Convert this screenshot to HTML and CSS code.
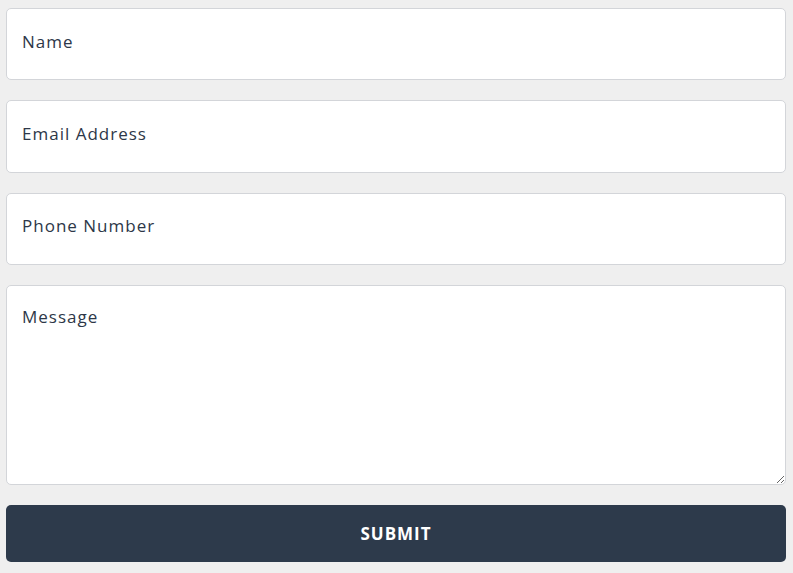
FILE: index.html
```html
<!DOCTYPE html>
<html lang="en">
<head>
<meta charset="utf-8">
<title>Contact</title>
<link rel="stylesheet" href="styles.css">
</head>
<body>
<form class="contact-form">
  <input class="field" type="text" placeholder="Name">
  <input class="field" type="email" placeholder="Email Address">
  <input class="field" type="tel" placeholder="Phone Number">
  <textarea class="field field-message" placeholder="Message"></textarea>
  <button class="submit" type="button">SUBMIT</button>
</form>
</body>
</html>
```

FILE: styles.css
```css
html, body {
  margin: 0;
  padding: 0;
  background: #efefef;
}
body {
  padding: 8px 7px 0 6px;
  font-family: "Open Sans", "DejaVu Sans", sans-serif;
}
.contact-form {
  display: flex;
  flex-direction: column;
  gap: 20px;
}
.field {
  box-sizing: border-box;
  width: 100%;
  height: 72.4px;
  margin: 0;
  padding: 0 15px 6px;
  border: 1px solid #d3d5d9;
  border-radius: 5px;
  background: #ffffff;
  font-family: inherit;
  font-size: 17px;
  letter-spacing: 1px;
  color: #2d3748;
  outline: none;
}
.field::placeholder {
  color: #2d3748;
  opacity: 1;
}
.field-message {
  height: 200px;
  padding: 19px 15px;
  line-height: 24px;
  resize: vertical;
  display: block;
}
.submit {
  height: 57px;
  width: 100%;
  border: none;
  border-radius: 5px;
  background: #2d3a4b;
  color: #ffffff;
  font-family: inherit;
  font-size: 17px;
  font-weight: 700;
  letter-spacing: 1px;
  cursor: pointer;
}
```
